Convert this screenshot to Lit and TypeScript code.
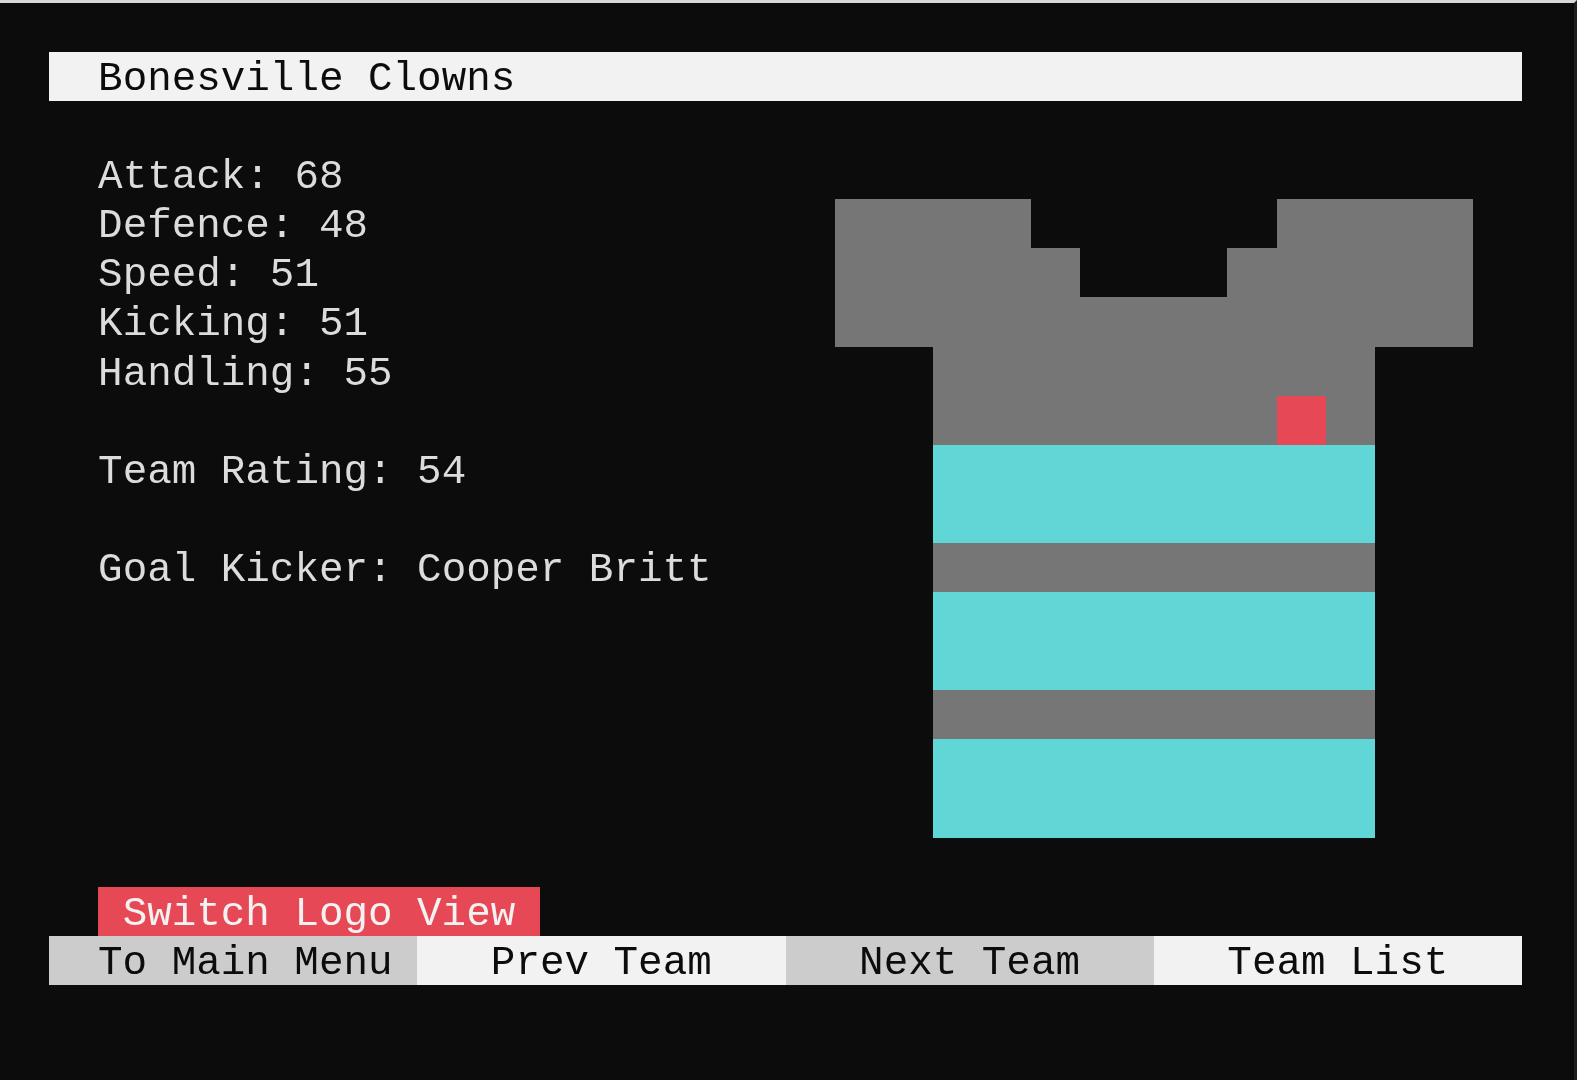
import { LitElement, html, css } from 'lit';
import { customElement } from 'lit/decorators.js';

type Colour = '' | 'g' | 'c' | 'r';

// one string per row of the jersey, 13 cells wide
const SHIRT = [
  'gggg.....gggg',
  'ggggg...ggggg',
  'ggggggggggggg',
  '..ggggggggg..',
  '..gggggggrg..',
  '..ccccccccc..',
  '..ccccccccc..',
  '..ggggggggg..',
  '..ccccccccc..',
  '..ccccccccc..',
  '..ggggggggg..',
  '..ccccccccc..',
  '..ccccccccc..',
];

const STATS = [
  'Attack: 68',
  'Defence: 48',
  'Speed: 51',
  'Kicking: 51',
  'Handling: 55',
  '',
  'Team Rating: 54',
  '',
  'Goal Kicker: Cooper Britt',
];

const NAV = [
  { label: 'To Main Menu', first: true, dark: true },
  { label: 'Prev Team', first: false, dark: false },
  { label: 'Next Team', first: false, dark: true },
  { label: 'Team List', first: false, dark: false },
];

@customElement('app-root')
export class AppRoot extends LitElement {
  static styles = css`
    :host {
      --u: 49.1px;
      display: block;
      width: 1577px;
      height: 1080px;
      box-sizing: border-box;
      overflow: hidden;
      padding: 49px 0 0 49px;
      border-top: 3px solid #d8d8d8;
      border-right: 3px solid #1e1e1e;
      background: #0c0c0c;
      color: #dcdcdc;
      font-family: 'Liberation Mono', monospace;
      font-size: 40.9px;
      /* text sits a little low in its cell, heights below stay on the grid */
      line-height: 55px;
      white-space: nowrap;
    }

    .frame {
      width: calc(var(--u) * 30);
      filter: blur(0.6px);
    }

    .title {
      height: var(--u);
      padding-left: var(--u);
      background: #f2f2f2;
      color: #0c0c0c;
    }

    .body {
      display: flex;
      justify-content: space-between;
      padding: var(--u) 0;
    }

    .stats {
      padding-left: var(--u);
    }

    .stat {
      height: var(--u);
    }

    .shirt {
      display: grid;
      grid-template-columns: repeat(13, var(--u));
      grid-auto-rows: var(--u);
      margin: var(--u) var(--u) 0 0;
    }

    .g { background: #767676; }
    .c { background: #61d6d6; }
    .r { background: #e74856; }

    .switch {
      display: block;
      width: fit-content;
      margin-left: var(--u);
      padding: 0 1ch;
      height: var(--u);
      background: #e74856;
      color: #f2f2f2;
    }

    .nav {
      display: grid;
      grid-template-columns: repeat(4, 1fr);
    }

    .nav div {
      height: var(--u);
      padding-left: 3ch;
      background: #f2f2f2;
      color: #0c0c0c;
    }

    .nav div.first {
      padding-left: 2ch;
    }

    .nav div.dark {
      background: #cccccc;
    }
  `;

  renderCell(ch: string) {
    const colour: Colour = ch === '.' ? '' : (ch as Colour);
    return html`<span class=${colour}></span>`;
  }

  render() {
    return html`
      <div class="frame">
        <div class="title">Bonesville Clowns</div>
        <div class="body">
          <div class="stats">
            ${STATS.map((s) => html`<div class="stat">${s}</div>`)}
          </div>
          <div class="shirt">
            ${SHIRT.map((row) => row.split('').map((ch) => this.renderCell(ch)))}
          </div>
        </div>
        <div class="switch">Switch Logo View</div>
        <div class="nav">
          ${NAV.map(
            (n) =>
              html`<div class="${n.first ? 'first' : ''} ${n.dark ? 'dark' : ''}">${n.label}</div>`
          )}
        </div>
      </div>
    `;
  }
}
